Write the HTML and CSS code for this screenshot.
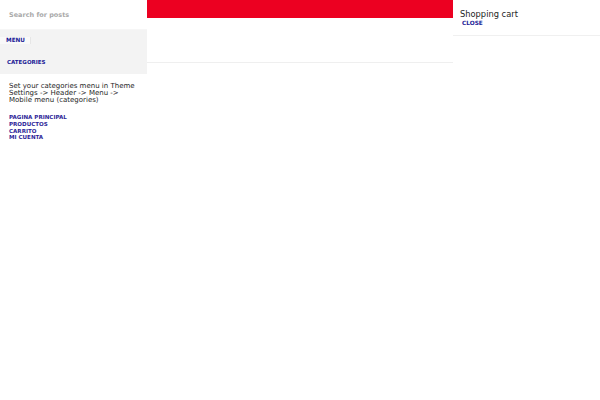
FILE: index.html
```html
<!DOCTYPE html>
<html>
<head>
<meta charset="utf-8">
<link rel="stylesheet" href="styles.css">
</head>
<body>
<div class="page">
  <aside class="side">
    <div class="search"><span class="placeholder">Search for posts</span></div>
    <div class="nav">
      <div class="tabs"><span class="tab">MENU</span></div>
      <div class="cats">CATEGORIES</div>
    </div>
    <p class="note">Set your categories menu in Theme Settings -&gt; Header -&gt; Menu -&gt; Mobile menu (categories)</p>
    <ul class="links">
      <li>PAGINA PRINCIPAL</li>
      <li>PRODUCTOS</li>
      <li>CARRITO</li>
      <li>MI CUENTA</li>
    </ul>
  </aside>
  <main class="mid">
    <div class="topbar"></div>
    <div class="header"></div>
  </main>
  <aside class="cart">
    <div class="cart-head">
      <div class="cart-title">Shopping cart</div>
      <div class="close">CLOSE</div>
    </div>
  </aside>
</div>
</body>
</html>
```
FILE: styles.css
```css
html, body {
  margin: 0;
  padding: 0;
  background: #fff;
  font-family: "DejaVu Sans", sans-serif;
}
.page {
  display: flex;
  width: 600px;
  height: 400px;
}
.side {
  width: 147px;
  flex: none;
}
.search {
  height: 30px;
  display: flex;
  align-items: center;
  padding-left: 9px;
  box-sizing: border-box;
  border-bottom: 1px solid #f6f6f6;
}
.placeholder {
  font-size: 6.5px;
  font-weight: bold;
  color: #a9a9a9;
}
.nav {
  background: #f3f3f3;
  height: 44px;
  padding-top: 7px;
  box-sizing: border-box;
}
.tabs {
  display: flex;
}
.tab {
  display: block;
  width: 31px;
  height: 7px;
  line-height: 7px;
  box-sizing: border-box;
  padding-left: 6px;
  background: #f9f9f9;
  border-right: 1px solid #e6e6e6;
  font-size: 5.7px;
  font-weight: bold;
  color: #1b1b96;
}
.cats {
  margin-top: 15px;
  padding-left: 7px;
  font-size: 5.5px;
  font-weight: bold;
  color: #1b1b96;
  line-height: 7px;
}
.note {
  margin: 9px 0 0;
  padding: 0 9px;
  font-size: 7px;
  line-height: 7px;
  color: #1e1e1e;
}
.links {
  list-style: none;
  margin: 10px 0 0;
  padding: 0 0 0 9px;
}
.links li {
  font-size: 5.55px;
  font-weight: bold;
  line-height: 6.8px;
  color: #2e1f98;
}
.mid {
  flex: 1;
}
.topbar {
  height: 18px;
  background: #ec0021;
}
.header {
  height: 45px;
  border-bottom: 1px solid #efefef;
  box-sizing: border-box;
}
.cart {
  width: 147px;
  flex: none;
}
.cart-head {
  height: 36px;
  box-sizing: border-box;
  border-bottom: 1px solid #f0f0f0;
  padding: 9px 0 0 7px;
}
.cart-title {
  font-size: 8.3px;
  line-height: 10px;
  color: #1e1e1e;
}
.close {
  padding: 1px 0 0 2px;
  font-size: 5.8px;
  font-weight: bold;
  line-height: 7px;
  color: #1b1b96;
}
```
